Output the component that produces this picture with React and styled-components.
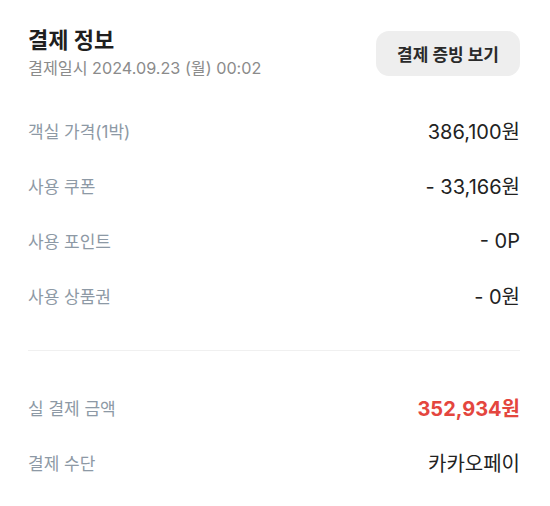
import React from "react"
import styled, { createGlobalStyle } from "styled-components"

const GlobalStyle = createGlobalStyle`
  html, body {
    margin: 0;
    padding: 0;
    background: #ffffff;
  }
  body {
    font-family: "Inter", "Noto Sans CJK KR", sans-serif;
    -webkit-font-smoothing: antialiased;
  }
`

const priceRows = [
  { label: "객실 가격(1박)", value: "386,100원" },
  { label: "사용 쿠폰", value: "- 33,166원" },
  { label: "사용 포인트", value: "- 0P" },
  { label: "사용 상품권", value: "- 0원" },
]

export default function App() {
  return (
    <>
      <GlobalStyle />
      <Container>
        <Header>
          <TitleBlock>
            <Title>결제 정보</Title>
            <PaidAt>결제일시 2024.09.23 (월) 00:02</PaidAt>
          </TitleBlock>
          <ReceiptButton>결제 증빙 보기</ReceiptButton>
        </Header>

        <List>
          {priceRows.map((row) => (
            <Row key={row.label}>
              <Label>{row.label}</Label>
              <Value>{row.value}</Value>
            </Row>
          ))}
        </List>

        <Divider />

        <List $after>
          <Row>
            <Label>실 결제 금액</Label>
            <Value $highlight>352,934원</Value>
          </Row>
          <Row>
            <Label>결제 수단</Label>
            <Value>카카오페이</Value>
          </Row>
        </List>
      </Container>
    </>
  )
}

const Container = styled.div`
  width: 550px;
  box-sizing: border-box;
  padding: 25px 30px 0 28px;
`

const Header = styled.div`
  display: flex;
  justify-content: space-between;
  align-items: center;
`

const TitleBlock = styled.div`
  display: flex;
  flex-direction: column;
`

const Title = styled.h2`
  margin: 0;
  font-size: 22px;
  line-height: 30px;
  font-weight: 700;
  color: #1f1f1f;
`

const PaidAt = styled.span`
  font-size: 16.2px;
  line-height: 26px;
  color: #8b8b8b;
`

const ReceiptButton = styled.button`
  height: 45px;
  padding: 0 21px;
  border: none;
  border-radius: 13px;
  background: #eeeeee;
  font-family: inherit;
  font-size: 17px;
  font-weight: 700;
  color: #2a2a2a;
  cursor: pointer;
`

const List = styled.div`
  display: flex;
  flex-direction: column;
  margin-top: ${(p) => (p.$after ? "29px" : "22px")};
`

const Row = styled.div`
  display: flex;
  justify-content: space-between;
  align-items: center;
  height: 55px;
`

const Label = styled.span`
  font-size: 17px;
  color: #8d99a5;
`

const Value = styled.span`
  font-size: 20px;
  font-weight: ${(p) => (p.$highlight ? 700 : 400)};
  color: ${(p) => (p.$highlight ? "#e4463e" : "#222222")};
`

const Divider = styled.hr`
  margin: 27px 0 0;
  border: none;
  height: 1px;
  background: #f0f0f0;
`
